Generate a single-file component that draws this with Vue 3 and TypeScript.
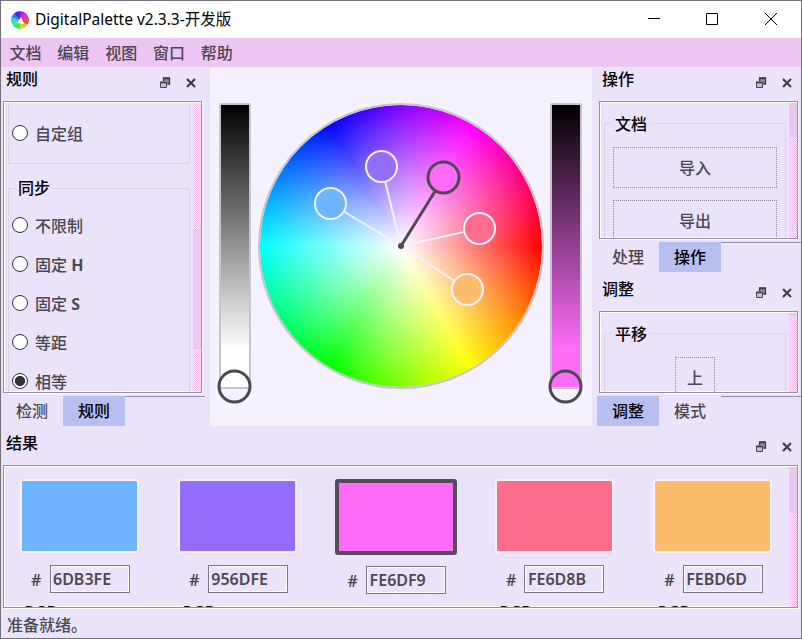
<script setup lang="ts">
import { ref } from 'vue'

interface Swatch {
  hex: string
  x: number
  y: number
}

const menus = ['文档', '编辑', '视图', '窗口', '帮助']
const syncModes = [
  { name: '不限制', axis: '' },
  { name: '固定', axis: 'H' },
  { name: '固定', axis: 'S' },
  { name: '等距', axis: '' },
  { name: '相等', axis: '' },
]
const syncMode = ref(4)

const swatches: Swatch[] = [
  { hex: '6DB3FE', x: 120.5, y: 136.5 },
  { hex: '956DFE', x: 171.5, y: 99.5 },
  { hex: 'FE6DF9', x: 233.5, y: 110.5 },
  { hex: 'FE6D8B', x: 269.5, y: 161.5 },
  { hex: 'FEBD6D', x: 257.5, y: 222.5 },
]
const active = ref(2)

const center = { x: 191, y: 179 }
const radius = 15.5

function spoke(s: Swatch) {
  const dx = s.x - center.x
  const dy = s.y - center.y
  const len = Math.hypot(dx, dy)
  return {
    x1: center.x,
    y1: center.y,
    x2: s.x - (dx / len) * radius,
    y2: s.y - (dy / len) * radius,
  }
}
</script>

<template>
  <div class="window">
    <svg class="symbols" width="0" height="0">
      <defs>
        <pattern id="checker" width="2" height="2" patternUnits="userSpaceOnUse" shape-rendering="crispEdges">
          <rect width="2" height="2" fill="#f8effc" />
          <rect width="1" height="1" fill="#edbfec" />
          <rect x="1" y="1" width="1" height="1" fill="#edbfec" />
        </pattern>
      </defs>
      <symbol id="dock-icons" viewBox="0 0 38 12">
        <path d="M4 .5h7v7H8V4H4z" fill="#8b8791" />
        <path d="M4.500 4V1h6v6H8.500M4 1.500h7" fill="none" stroke="#403c45" stroke-width="1.3" />
        <path d="M1.500 5h6v5.500h-6z" fill="#c5c0cd" stroke="#4a4650" />
        <path d="M1 5.500h7" stroke="#403c45" stroke-width="1.600" />
        <path d="M28 2l8 8M36 2l-8 8" fill="none" stroke="#403c45" stroke-width="2.200" />
      </symbol>
    </svg>

    <header class="titlebar">
      <span class="logo"><span class="logo-ring"></span>
        <svg class="logo-mark" viewBox="0 0 18 18"><path d="M10 6 L13 13 L6 12 Z" fill="#fff" /></svg>
      </span>
      <span class="title">DigitalPalette v2.3.3-开发版</span>
      <svg class="win-controls" width="140" height="20" viewBox="0 0 140 20" fill="none" stroke="#000">
        <path d="M4 8.5H16M62.5 3.500h11v11h-11zM121 3l12 12M133 3l-12 12" />
      </svg>
    </header>

    <nav class="menubar">
      <span v-for="m in menus" :key="m">{{ m }}</span>
    </nav>

    <main class="workspace">
      <section class="dock left">
        <div class="dock-title">
          <span>规则</span>
          <svg class="dock-icons" width="38" height="12"><use href="#dock-icons" /></svg>
        </div>
        <div class="frame rules">
          <div class="content">
            <div class="group open-top">
              <label class="radio"><i class="dot"></i><span class="name">自定组</span></label>
            </div>
            <div class="group sync">
              <span class="legend">同步</span>
              <label v-for="(m, i) in syncModes" :key="i" class="radio" @click="syncMode = i">
                <i class="dot" :class="{ on: i === syncMode }"></i>
                <span class="name">{{ m.name }}<b v-if="m.axis">&nbsp;{{ m.axis }}</b></span>
              </label>
            </div>
          </div>
          <div class="scroll">
            <svg class="track" width="8" height="288"><rect width="8" height="288" fill="url(#checker)" /></svg>
            <div class="thumb"></div>
          </div>
        </div>
        <div class="tabs">
          <span class="tab">检测</span>
          <span class="tab current">规则</span>
          <span class="rule"></span>
        </div>
      </section>

      <section class="stage">
        <div class="slider gray"></div>
        <div class="wheel"></div>
        <div class="slider pink"></div>
        <svg class="handles" width="382" height="359" viewBox="0 0 382 359" fill="none">
          <g v-for="(s, i) in swatches" :key="s.hex" :class="i === active ? 'picked' : 'plain'">
            <line v-bind="spoke(s)" />
            <circle :cx="s.x" :cy="s.y" :r="radius" :fill="'#' + s.hex" />
          </g>
          <circle class="hub" :cx="center.x" :cy="center.y" r="3" />
          <circle class="knob" cx="24.500" cy="319.500" r="15.500" />
          <circle class="knob" cx="355.500" cy="319.500" r="15.500" />
        </svg>
      </section>

      <div class="right">
        <section class="dock ops">
          <div class="dock-title">
            <span>操作</span>
            <svg class="dock-icons" width="38" height="12"><use href="#dock-icons" /></svg>
          </div>
          <div class="frame">
            <div class="content">
              <div class="group file">
                <span class="legend">文档</span>
                <button>导入</button>
                <button>导出</button>
              </div>
            </div>
            <div class="scroll">
              <svg class="track" width="8" height="288"><rect width="8" height="288" fill="url(#checker)" /></svg>
              <div class="thumb"></div>
            </div>
          </div>
          <div class="tabs">
            <span class="tab">处理</span>
            <span class="tab current">操作</span>
            <span class="rule"></span>
          </div>
        </section>

        <section class="dock adjust">
          <div class="dock-title">
            <span>调整</span>
            <svg class="dock-icons" width="38" height="12"><use href="#dock-icons" /></svg>
          </div>
          <div class="frame">
            <div class="content">
              <div class="group move">
                <span class="legend">平移</span>
                <button class="square">上</button>
              </div>
            </div>
            <div class="scroll">
              <svg class="track" width="8" height="288"><rect width="8" height="288" fill="url(#checker)" /></svg>
              <div class="thumb"></div>
            </div>
          </div>
          <div class="tabs">
            <span class="tab current">调整</span>
            <span class="tab">模式</span>
            <span class="rule"></span>
          </div>
        </section>
      </div>
    </main>

    <section class="dock results">
      <div class="dock-title">
        <span>结果</span>
        <svg class="dock-icons" width="38" height="12"><use href="#dock-icons" /></svg>
      </div>
      <div class="frame">
        <div class="content cards">
          <div v-for="(s, i) in swatches" :key="s.hex" class="card" :class="{ chosen: i === active }" @click="active = i">
            <div class="color" :style="{ backgroundColor: '#' + s.hex }"></div>
            <div class="hex"><span class="hash">#</span><span class="field">{{ s.hex }}</span></div>
            <div class="mode">RGB</div>
          </div>
        </div>
        <div class="scroll">
          <svg class="track" width="8" height="288"><rect width="8" height="288" fill="url(#checker)" /></svg>
          <div class="thumb"></div>
        </div>
      </div>
    </section>

    <footer class="status">准备就绪。</footer>
  </div>
</template>

<style>
body {
  margin: 0;
  overflow: hidden;
}
</style>

<style scoped>
* {
  box-sizing: border-box;
}
.window {
  width: 802px;
  height: 639px;
  border: 1px solid #737078;
  background: #ebe3fc;
  color: #4b4850;
  font: 500 16px/24px 'Noto Sans', 'Noto Sans CJK SC', sans-serif;
  display: flex;
  flex-direction: column;
  overflow: hidden;
}
.symbols {
  position: absolute;
}
b {
  font-weight: 700;
}
.titlebar {
  height: 37px;
  flex: none;
  background: #fff;
  color: #000;
  display: flex;
  align-items: center;
  padding-left: 10px;
}
.logo {
  width: 18px;
  height: 18px;
  display: grid;
}
.logo-ring,
.logo-mark {
  grid-area: 1 / 1;
  width: 18px;
  height: 18px;
}
.logo-ring {
  border-radius: 50%;
  background: conic-gradient(#a02be8 0 30deg, #e62bd0 30deg 60deg, #f03a8a 60deg 90deg, #f0483a 90deg 120deg, #f5b13a 120deg 150deg, #b8e83a 150deg 180deg, #4be83a 180deg 220deg, #38e8a0 220deg 255deg, #38c8f0 255deg 290deg, #3878f0 290deg 320deg, #4a2be0 320deg);
}
.title {
  font-weight: 400;
  font-size: 15.500px;
  margin: -1px 0 0 6px;
  flex: 1;
}
.win-controls {
  margin-right: 17px;
}
.menubar {
  height: 29px;
  flex: none;
  background: #edc6f3;
  display: flex;
  gap: 15.800px;
  padding: 3px 8.500px;
}
.workspace {
  height: 359px;
  flex: none;
  display: flex;
}
.dock {
  display: flex;
  flex-direction: column;
}
.left {
  width: 209px;
  padding: 0 8px 0 2px;
}
.dock-title {
  height: 34px;
  flex: none;
  display: flex;
  justify-content: space-between;
  color: #000;
  padding: 0 5px 0 3px;
}
.dock-icons {
  margin-top: 10px;
}
.frame {
  border: 1px solid #978ea5;
  box-shadow: inset 0 0 0 1px #fff, 1px 1px 0 #fff;
  padding: 1px 0 0 1px;
  display: flex;
  overflow: hidden;
}
.rules {
  height: 292px;
}
.content {
  flex: 1;
  overflow: hidden;
  padding: 0 3px;
}
.scroll {
  width: 8px;
  flex: none;
  overflow: hidden;
  display: grid;
  align-items: start;
}
.track,
.thumb {
  grid-area: 1 / 1;
}
.thumb {
  background: #edc6f3;
  height: 34px;
}
.rules .thumb {
  height: 120px;
  margin-top: 126px;
}
.group {
  border: 1px solid #ddd5e6;
  width: 182px;
}
.open-top {
  border-top: 0;
  height: 61px;
  padding-top: 10px;
}
.radio {
  height: 39px;
  display: flex;
  align-items: center;
  gap: 7px;
  padding-left: 3px;
}
.name {
  padding-top: 2px;
}
.dot {
  width: 16px;
  height: 16px;
  flex: none;
  border: 1px solid #35323a;
  border-radius: 50%;
  background: #fff;
}
.dot.on {
  background: radial-gradient(circle, #333 4.700px, #fff 5.400px);
}
.sync {
  margin-top: 24px;
  height: 240px;
}
.legend {
  display: block;
  width: 36px;
  height: 24px;
  margin: -13px 0 5px 7px;
  text-align: center;
  color: #000;
  background: #ebe3fc;
}
.tabs {
  height: 33px;
  padding-top: 3px;
  flex: none;
  display: flex;
}
.tab {
  width: 62px;
  height: 30px;
  line-height: 30px;
  text-align: center;
}
.tab.current {
  background: #b6bff0;
  color: #000;
}
.left .tab {
  width: 60px;
  padding-right: 2px;
}
.left .tab.current {
  width: 62px;
  padding-right: 0;
}
.rule {
  flex: 1;
  height: 1px;
  background: #978ea5;
}
.left .rule {
  margin-right: -3px;
}

.stage {
  width: 382px;
  background: #f5f1ff;
  position: relative;
  display: flex;
  padding: 36px 10px 0 9px;
  justify-content: space-between;
}
.slider {
  width: 32px;
  height: 286px;
  border: 2px solid #c7c4cb;
  border-radius: 2px;
}
.gray {
  background: linear-gradient(#000, #fff 244px, #fff);
}
.pink {
  background: linear-gradient(#000, #fe6df9 244px, #fe6df9);
}
.wheel {
  width: 286px;
  height: 286px;
  border-radius: 50%;
  border: 2px solid #c7c4cb;
  background: radial-gradient(closest-side, #fff, #fff0) padding-box, conic-gradient(from 90deg, #f00, #ff0, #0f0, #0ff, #00f, #f0f, #f00) padding-box;
}
.handles {
  position: absolute;
  left: 0;
  top: 0;
}
.plain {
  stroke: #f5f1ff;
  stroke-width: 2;
}
.picked {
  stroke: #4f4954;
  stroke-width: 3;
}
.hub {
  fill: #4f4954;
}
.knob {
  stroke: #4b4850;
  stroke-width: 3;
}

.right {
  width: 209px;
  flex: none;
}
.right .dock-title {
  padding: 0 8px 0 10px;
}
.right .frame {
  margin: 0 3px 0 7px;
}
.right .tabs {
  padding-left: 5px;
}
.ops {
  height: 210px;
}
.ops .frame {
  height: 138px;
}
.adjust {
  height: 149px;
}
.adjust .frame {
  height: 82px;
}
.adjust .thumb {
  height: 3px;
}
.right .group {
  height: 200px;
  margin-top: 20px;
}
.right .legend {
  width: 38px;
  margin: -12px 0 11px 7px;
}
button {
  display: block;
  width: 164px;
  height: 41px;
  margin: 0 auto 12px 8px;
  padding: 0;
  background: none;
  border: 1px dotted #8f84a0;
  color: inherit;
  font: inherit;
}
button.square {
  width: 40px;
  margin-left: 70px;
}

.results {
  height: 182px;
  flex: none;
  padding: 0 3px 0 2px;
}
.results .dock-title {
  height: 39px;
  padding: 5px 5px 0 3px;
}
.results .frame {
  height: 143px;
}
.results .thumb {
  height: 46px;
}
.cards {
  display: flex;
  gap: 36.300px;
  padding: 11px 0 0 14px;
}
.card {
  width: 122px;
  flex: none;
}
.color {
  width: 119px;
  height: 74px;
  margin: 1px 1px 12px;
  border: 2px solid #f6f1fb;
  border-radius: 3px;
}
.chosen .color {
  width: 122px;
  height: 76px;
  margin: 1px 0 11px -1px;
  border: 4px solid #544e58;
}
.hex {
  height: 28px;
  display: flex;
  align-items: center;
  padding-left: 12px;
  font-weight: 600;
}
.hash {
  width: 18.500px;
  padding-top: 1px;
  flex: none;
}
.field {
  width: 80px;
  height: 28px;
  line-height: 26px;
  padding-left: 2.500px;
  border: 1px solid #7d7486;
  box-shadow: inset 0 0 0 1px #fff;
}
.mode {
  margin: 7px 0 0 5.500px;
  color: #000;
  font-weight: 600;
}
.status {
  flex: 1;
  padding: 5px 6px;
}
</style>
